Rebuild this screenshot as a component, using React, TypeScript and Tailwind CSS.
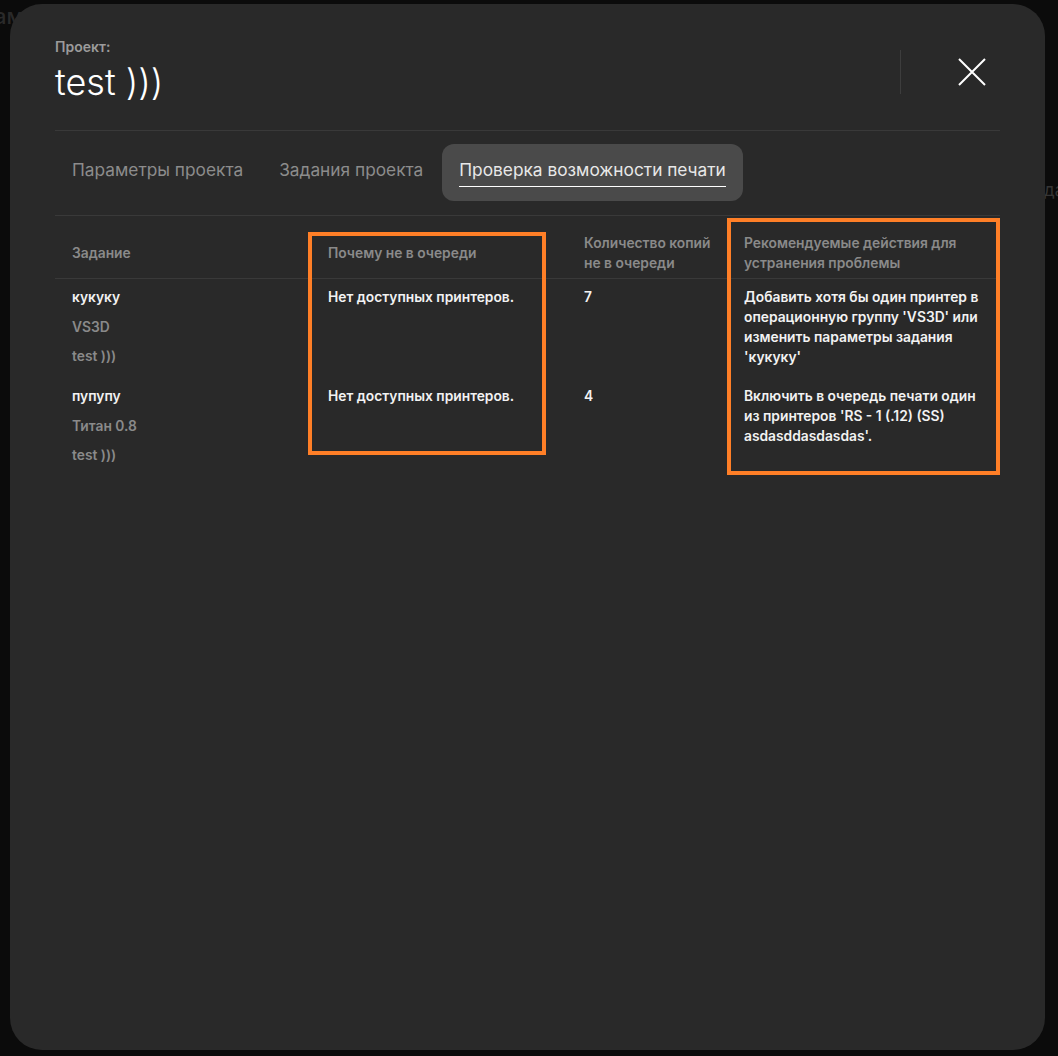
import React from "react";

type Row = {
  name: string;
  group: string;
  project: string;
  reason: string;
  count: string;
  action: React.ReactNode;
};

const rows: Row[] = [
  {
    name: "кукуку",
    group: "VS3D",
    project: "test )))",
    reason: "Нет доступных принтеров.",
    count: "7",
    action: (
      <>
        Добавить хотя бы один принтер в<br />
        операционную группу 'VS3D' или<br />
        изменить параметры задания<br />
        'кукуку'
      </>
    ),
  },
  {
    name: "пупупу",
    group: "Титан 0.8",
    project: "test )))",
    reason: "Нет доступных принтеров.",
    count: "4",
    action: (
      <>
        Включить в очередь печати один<br />
        из принтеров 'RS - 1 (.12) (SS)<br />
        asdasddasdasdas'.
      </>
    ),
  },
];

export default function App() {
  return (
    <div className="relative min-h-screen w-full overflow-hidden bg-[#0b0b0b] pl-[10px] pt-[4px] font-[Inter,sans-serif]">
      <span className="absolute left-[-6px] top-[0px] text-[22px] font-medium text-[#2a2a2a]">ам</span>
      <span className="absolute left-[1044px] top-[178px] text-[17px] text-[#353535]">да</span>

      <div className="relative h-[1046px] w-[1035px] rounded-[32px] bg-[#292929] px-[45px] pt-[35px]">
        {/* Header */}
        <div className="flex items-center justify-between border-b border-[#393939] pb-[26px]">
          <div className="flex flex-col">
            <span className="text-[14px] font-semibold leading-[16px] text-[#9b9b9b]">Проект:</span>
            <span className="mt-[5px] text-[36px] font-light leading-[44px] text-white">test )))</span>
          </div>
          <div className="flex items-center gap-[43px]">
            <div className="h-[44px] w-px bg-[#3d3d3d]" />
            <button className="flex h-[56px] w-[56px] items-center justify-center">
              <svg width="28" height="28" viewBox="0 0 28 28" fill="none">
                <path d="M1 1L27 27M27 1L1 27" stroke="#ffffff" strokeWidth="2" />
              </svg>
            </button>
          </div>
        </div>

        {/* Tabs */}
        <div className="flex gap-[2px] border-b border-[#393939] pb-[14px] pt-[13px]">
          <div className="rounded-[12px] px-[17px] py-[14px] text-[17.3px] leading-[24px] text-[#8c8c8c]">
            <span className="block border-b border-transparent pb-[4px]">Параметры проекта</span>
          </div>
          <div className="rounded-[12px] px-[17px] py-[14px] text-[17.3px] leading-[24px] text-[#8c8c8c]">
            <span className="block border-b border-transparent pb-[4px]">Задания проекта</span>
          </div>
          <div className="rounded-[12px] bg-[#4a4a4a] px-[17px] py-[14px] text-[17.3px] leading-[24px] text-[#e8e8e8]">
            <span className="block border-b border-white pb-[4px]">Проверка возможности печати</span>
          </div>
        </div>

        {/* Table */}
        <div className="text-[13.8px] font-semibold leading-[20px]">
          <div className="grid grid-cols-[256px_256px_160px_1fr] items-center border-b border-[#393939] pb-[5px] pt-[17px] text-[#8a8a8a]">
            <div className="pl-[17px]">Задание</div>
            <div className="pl-[17px]">Почему не в очереди</div>
            <div className="pl-[17px]">
              Количество копий
              <br />
              не в очереди
            </div>
            <div className="pl-[17px]">
              Рекомендуемые действия для
              <br />
              устранения проблемы
            </div>
          </div>

          {rows.map((r) => (
            <div key={r.name} className="grid grid-cols-[256px_256px_160px_1fr] items-start pb-[11px] pt-[8px]">
              <div className="flex flex-col gap-[9.5px] pl-[17px]">
                <span className="text-[#f2f2f2]">{r.name}</span>
                <span className="text-[#8a8a8a]">{r.group}</span>
                <span className="text-[#8a8a8a]">{r.project}</span>
              </div>
              <div className="pl-[17px] text-[#f2f2f2]">{r.reason}</div>
              <div className="pl-[17px] text-[#f2f2f2]">{r.count}</div>
              <div className="pl-[17px] text-[#f2f2f2]">{r.action}</div>
            </div>
          ))}
        </div>

        {/* Annotation boxes */}
        <div className="pointer-events-none absolute left-[298px] top-[228px] h-[223px] w-[238px] border-[4px] border-[#ff7f27]" />
        <div className="pointer-events-none absolute left-[717px] top-[214px] h-[257px] w-[273px] border-[4px] border-[#ff7f27]" />
      </div>
    </div>
  );
}
